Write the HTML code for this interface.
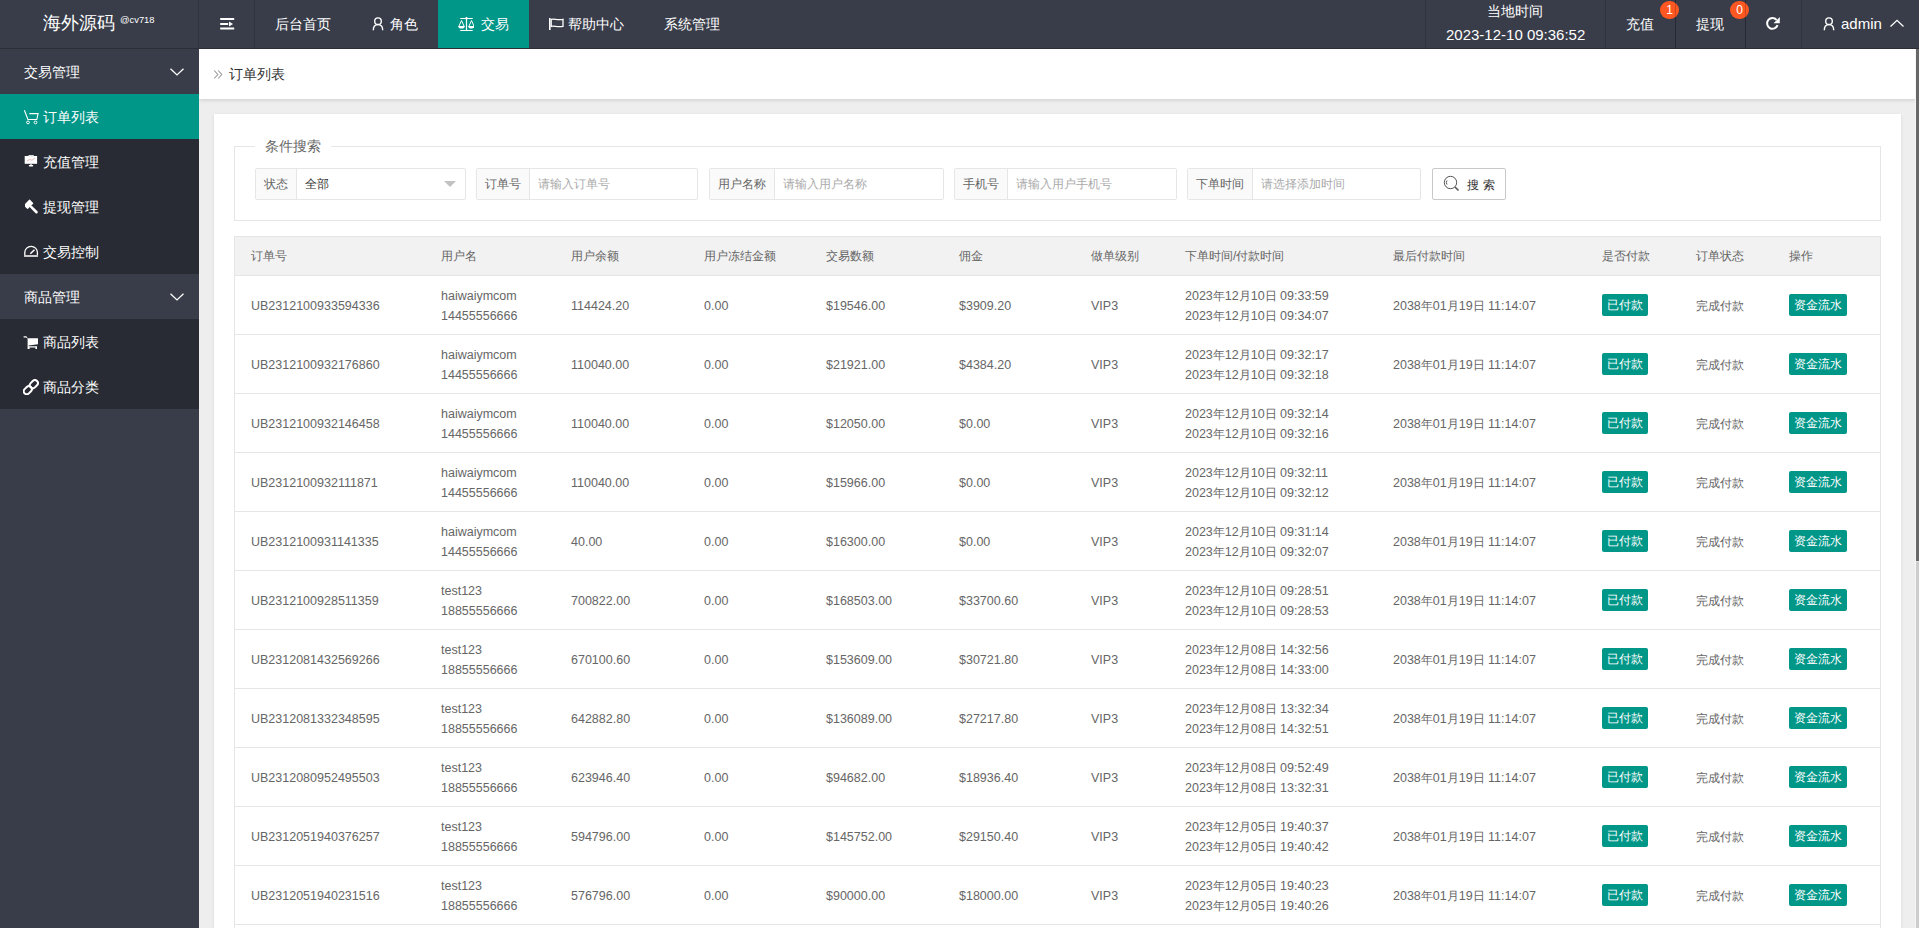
<!DOCTYPE html><html><head><meta charset="utf-8"><style>
*{margin:0;padding:0;box-sizing:border-box}
html,body{width:1919px;height:928px;overflow:hidden;background:#eee;font-family:"Liberation Sans",sans-serif;}
.abs{position:absolute}
.hdr{position:absolute;left:0;top:0;width:1919px;height:49px;background:#393D49;}
.hdr .t{position:absolute;color:#fff;font-size:14px;line-height:16px;white-space:nowrap}
.sep{position:absolute;top:0;width:1px;height:48px;background:#30333d}
.side{position:absolute;left:0;top:49px;width:199px;height:879px;background:#393D49}
.it{position:absolute;left:0;width:199px;height:45px;}
.it .t{position:absolute;left:43px;top:15px;color:#fff;font-size:14px;line-height:16px;white-space:nowrap}
.content{position:absolute;left:199px;top:49px;width:1717px;height:879px;background:#eeeeee;overflow:hidden}
.bc{position:absolute;left:0;top:0;width:1717px;height:50px;background:#fff;box-shadow:0 1px 4px rgba(0,0,0,.14)}
.card{position:absolute;left:15px;top:65px;width:1687px;height:900px;background:#fff;box-shadow:0 1px 3px 0 rgba(0,0,0,.1)}
.fs{position:absolute;left:20px;top:32px;width:1647px;height:75px;border:1px solid #e6e6e6}
.lg{position:absolute;left:20px;top:-9px;width:76px;padding:0 10px;white-space:nowrap;background:#fff;color:#666;font-size:14px;line-height:16px;}
.ig{position:absolute;top:21px;height:32px;border:1px solid #e6e6e6;border-radius:2px;background:#fff}
.ig .lb{position:absolute;left:0;top:0;height:30px;background:#fafafa;border-right:1px solid #e6e6e6;color:#666;font-size:12px;line-height:30px;text-align:center}
.ig .ph{position:absolute;top:0;color:#aaa;font-size:12px;line-height:30px;white-space:nowrap}
.tbl{position:absolute;left:20px;top:122px;width:1647px;height:800px;border-left:1px solid #e6e6e6;border-right:1px solid #e6e6e6;border-top:1px solid #e6e6e6}
.th{position:absolute;left:0;top:0;width:1645px;height:39px;background:#f2f2f2;border-bottom:1px solid #e6e6e6}
.tr{position:absolute;left:0;width:1645px;height:59px;border-bottom:1px solid #e6e6e6;background:#fff}
.c{position:absolute;color:#666;font-size:12.5px;line-height:20px;white-space:nowrap}
.c i,.bdg i{font-style:normal;font-size:12px;display:inline-block;width:12px}
.th .c{font-size:12px}
.bdg{position:absolute;top:18px;height:22px;line-height:22px;padding:0 5px;background:#009688;color:#fff;font-size:12px;border-radius:2px;white-space:nowrap}
</style></head><body>
<div class="hdr">
<div class="abs" style="left:0;top:48px;width:1919px;height:1px;background:#2b2e37"></div>
<div class="t" style="left:43px;top:13px;font-size:18px;line-height:20px">海外源码</div>
<div class="t" style="left:120px;top:14px;font-size:9.4px;line-height:12px">@cv718</div>
<div class="sep" style="left:198px"></div>
<div class="sep" style="left:254px"></div>
<div class="sep" style="left:1425px"></div>
<div class="sep" style="left:1605px"></div>
<div class="sep" style="left:1675px"></div>
<div class="sep" style="left:1745px"></div>
<div class="sep" style="left:1801px"></div>
<svg width="16" height="16" viewBox="0 0 16 16" style="position:absolute;left:219px;top:16px"><rect x="1.2" y="2" width="14" height="2" fill="#fff"/><rect x="1.2" y="7" width="8" height="2" fill="#fff"/><path d="M10 5.6 L14 8 L10 10.4Z" fill="#fff"/><rect x="1.2" y="11.5" width="14" height="2" fill="#fff"/></svg>
<div class="t" style="left:275px;top:16px">后台首页</div>
<svg width="14" height="16" viewBox="0 0 14 16" style="position:absolute;left:372px;top:16px"><circle cx="6" cy="5.2" r="3.3" fill="none" stroke="#fff" stroke-width="1.4"/><path d="M1.3 14.2 C1.3 10.5 3.3 8.6 6 8.6 C8.7 8.6 10.7 10.5 10.7 14.2" fill="none" stroke="#fff" stroke-width="1.4"/></svg>
<div class="t" style="left:390px;top:16px">角色</div>
<div class="abs" style="left:438px;top:0;width:91px;height:48px;background:#009688"></div>
<svg width="16" height="16" viewBox="0 0 16 16" style="position:absolute;left:458px;top:16px"><path d="M2.3 2.5 H14.7 M8.5 2.5 V14.5 M2.3 14.5 H14.7" fill="none" stroke="#fff" stroke-width="1.2"/><circle cx="8.5" cy="2.3" r="1.2" fill="#fff"/><path d="M3.5 4.5 L0.8 10.5 M3.5 4.5 L6.2 10.5 M13.5 4.5 L10.8 10.5 M13.5 4.5 L16.2 10.5" fill="none" stroke="#fff" stroke-width="1"/><path d="M0.3 10 H6.7 A3.2 2.6 0 0 1 0.3 10Z M10.3 10 H16.7 A3.2 2.6 0 0 1 10.3 10Z" fill="#fff"/></svg>
<div class="t" style="left:481px;top:16px">交易</div>
<svg width="16" height="16" viewBox="0 0 16 16" style="position:absolute;left:548px;top:16px"><rect x="1" y="2" width="1.6" height="12" fill="#fff"/><path d="M3.2 3.4 C6 2.2 9 4.6 15 3.4 V10.4 C9 11.6 6 9.2 3.2 10.4Z" fill="none" stroke="#fff" stroke-width="1.3"/></svg>
<div class="t" style="left:568px;top:16px">帮助中心</div>
<div class="t" style="left:664px;top:16px">系统管理</div>
<div class="t" style="left:1487px;top:3px">当地时间</div>
<div class="t" style="left:1446px;top:26px;font-size:15px;line-height:17px">2023-12-10 09:36:52</div>
<div class="t" style="left:1626px;top:16px">充值</div>
<div class="t" style="left:1696px;top:16px">提现</div>
<div class="abs" style="left:1660px;top:1px;width:19px;height:18px;border-radius:9px;background:#FF5722;color:#fff;font-size:12px;line-height:19px;text-align:center">1</div>
<div class="abs" style="left:1730px;top:1px;width:19px;height:18px;border-radius:9px;background:#FF5722;color:#fff;font-size:12px;line-height:19px;text-align:center">0</div>
<div class="sep" style="left:1675px;background:rgba(0,0,0,.18)"></div>
<div class="sep" style="left:1745px;background:rgba(0,0,0,.18)"></div>
<svg width="16" height="16" viewBox="0 0 16 16" style="position:absolute;left:1765px;top:16px"><path d="M12.6 9.2 A5.4 5.4 0 1 1 11.6 3.8" fill="none" stroke="#fff" stroke-width="2"/><path d="M14.8 1 V7.2 H8.6Z" fill="#fff"/></svg>
<svg width="14" height="16" viewBox="0 0 14 16" style="position:absolute;left:1823px;top:16px"><circle cx="6" cy="5.2" r="3.3" fill="none" stroke="#fff" stroke-width="1.4"/><path d="M1.3 14.2 C1.3 10.5 3.3 8.6 6 8.6 C8.7 8.6 10.7 10.5 10.7 14.2" fill="none" stroke="#fff" stroke-width="1.4"/></svg>
<div class="t" style="left:1841px;top:15px;font-size:15px;line-height:17px">admin</div>
<svg width="16" height="10" viewBox="0 0 16 10" style="position:absolute;left:1889px;top:19px"><path d="M1.5 7.5 L8 1.3 L14.5 7.5" fill="none" stroke="#fff" stroke-width="1.3"/></svg>
</div>
<div class="side">
<div class="it" style="top:0px;background:#393D49">
<div class="t" style="left:24px;top:15px">交易管理</div>
<svg width="16" height="10" viewBox="0 0 16 10" style="position:absolute;left:169px;top:19px"><path d="M1.5 0.8 L8 6.9 L14.5 0.8" fill="none" stroke="#fff" stroke-width="1.3"/></svg>
</div>
<div class="it" style="top:45px;background:#009688">
<svg width="16" height="16" viewBox="0 0 16 16" style="position:absolute;left:23px;top:15px"><path d="M1.4 1.2 L4.9 10.5 H13.8 L15.1 4.6 H6.3" fill="none" stroke="#fff" stroke-width="1.1"/><circle cx="5" cy="13.4" r="1.4" fill="none" stroke="#fff" stroke-width="1"/><circle cx="12.5" cy="13.4" r="1.4" fill="none" stroke="#fff" stroke-width="1"/></svg>
<div class="t">订单列表</div>
</div>
<div class="it" style="top:90px;background:#282B33">
<svg width="16" height="16" viewBox="0 0 16 16" style="position:absolute;left:23px;top:13px"><rect x="1.7" y="4" width="12.4" height="7.8" fill="#fff"/><rect x="5.5" y="3" width="5.3" height="1.5" fill="#ddd"/><path d="M4 9 L6.5 7.5 L9 8.2 L12 6" fill="none" stroke="#d99" stroke-width=".7"/><rect x="7.4" y="11.8" width="1.2" height="1.5" fill="#fff"/><rect x="5.8" y="13.1" width="4.4" height="1.3" rx=".6" fill="#fff"/></svg>
<div class="t">充值管理</div>
</div>
<div class="it" style="top:135px;background:#282B33">
<svg width="16" height="16" viewBox="0 0 16 16" style="position:absolute;left:24.5px;top:15px"><g transform="rotate(-45 8 8)"><rect x="2.6" y="0.2" width="8.4" height="5.6" rx="0.6" fill="#fff"/><rect x="5.5" y="5.4" width="2.6" height="10" rx="1.2" fill="#fff"/></g></svg>
<div class="t">提现管理</div>
</div>
<div class="it" style="top:180px;background:#282B33">
<svg width="16" height="16" viewBox="0 0 16 16" style="position:absolute;left:23px;top:14px"><path d="M1.8 13.2 V9.6 A6.3 6.3 0 0 1 14.4 9.6 V13.2Z" fill="none" stroke="#fff" stroke-width="1.3"/><rect x="1.2" y="12" width="13.8" height="1.8" fill="#ccc"/><path d="M7.3 10.8 L11.5 6.8" stroke="#fff" stroke-width="1.5"/></svg>
<div class="t">交易控制</div>
</div>
<div class="it" style="top:225px;background:#393D49">
<div class="t" style="left:24px;top:15px">商品管理</div>
<svg width="16" height="10" viewBox="0 0 16 10" style="position:absolute;left:169px;top:19px"><path d="M1.5 0.8 L8 6.9 L14.5 0.8" fill="none" stroke="#fff" stroke-width="1.3"/></svg>
</div>
<div class="it" style="top:270px;background:#282B33">
<svg width="16" height="16" viewBox="0 0 16 16" style="position:absolute;left:23px;top:16px"><path d="M0.6 1.3 H3.4 L4.7 3.2 H15 V9.3 L5.6 10.6 V11.3 H14 V14 H12.4 V12.6 H6.6 V14 H4.6 V3.4 L3 2.4 H0.6Z" fill="#fff"/></svg>
<div class="t">商品列表</div>
</div>
<div class="it" style="top:315px;background:#282B33">
<svg width="16" height="16" viewBox="0 0 16 16" style="position:absolute;left:23px;top:14.5px"><g transform="rotate(-45 8 8)" fill="none" stroke="#fff" stroke-width="2"><rect x="-1" y="5" width="9" height="6" rx="3"/><rect x="7.5" y="5" width="9" height="6" rx="3"/></g></svg>
<div class="t">商品分类</div>
</div>
</div>
<div class="content">
<div class="bc"><svg width="12" height="12" viewBox="0 0 12 12" style="position:absolute;left:214px;top:20px;left:14px"><path d="M1.2 1.5 L4.8 5.5 L1.2 9.5 M5.2 1.5 L8.8 5.5 L5.2 9.5" fill="none" stroke="#999" stroke-width="1.1"/></svg><div class="abs" style="left:30px;top:17px;color:#333;font-size:14px;line-height:16px">订单列表</div></div>
<div class="card">
<div class="fs"><div class="lg">条件搜索</div>
<div class="ig" style="left:20px;width:211px"><div class="lb" style="width:41px">状态</div>
<div class="ph" style="left:49px;color:#333">全部</div>
<svg width="14" height="8" viewBox="0 0 14 8" style="position:absolute;left:187px;top:11px"><path d="M1 1 H13 L7 7Z" fill="#c2c2c2"/></svg>
</div>
<div class="ig" style="left:241px;width:222px"><div class="lb" style="width:53px">订单号</div>
<div class="ph" style="left:61px;color:#aaa">请输入订单号</div>
</div>
<div class="ig" style="left:474px;width:235px"><div class="lb" style="width:65px">用户名称</div>
<div class="ph" style="left:73px;color:#aaa">请输入用户名称</div>
</div>
<div class="ig" style="left:719px;width:223px"><div class="lb" style="width:53px">手机号</div>
<div class="ph" style="left:61px;color:#aaa">请输入用户手机号</div>
</div>
<div class="ig" style="left:952px;width:234px"><div class="lb" style="width:65px">下单时间</div>
<div class="ph" style="left:73px;color:#aaa">请选择添加时间</div>
</div>
<div class="abs" style="left:1197px;top:21px;width:74px;height:32px;border:1px solid #c9c9c9;border-radius:2px;background:#fff">
<svg width="18" height="18" viewBox="0 0 18 18" style="position:absolute;left:10px;top:6px"><circle cx="7.5" cy="7.5" r="6.2" fill="none" stroke="#555" stroke-width="1"/><path d="M4 5.5 A3.5 3.5 0 0 0 4 9.5" fill="none" stroke="#555" stroke-width="1"/><path d="M12 12 L15.5 15.5" stroke="#555" stroke-width="1.6"/></svg>
<div class="abs" style="left:34px;top:9px;color:#333;font-size:12px;line-height:14px;letter-spacing:4px;white-space:nowrap">搜索</div>
</div>
</div>
<div class="tbl"><div class="th">
<div class="c" style="left:16px;top:9px"><i>订</i><i>单</i><i>号</i></div>
<div class="c" style="left:206px;top:9px"><i>用</i><i>户</i><i>名</i></div>
<div class="c" style="left:336px;top:9px"><i>用</i><i>户</i><i>余</i><i>额</i></div>
<div class="c" style="left:469px;top:9px"><i>用</i><i>户</i><i>冻</i><i>结</i><i>金</i><i>额</i></div>
<div class="c" style="left:591px;top:9px"><i>交</i><i>易</i><i>数</i><i>额</i></div>
<div class="c" style="left:724px;top:9px"><i>佣</i><i>金</i></div>
<div class="c" style="left:856px;top:9px"><i>做</i><i>单</i><i>级</i><i>别</i></div>
<div class="c" style="left:950px;top:9px"><i>下</i><i>单</i><i>时</i><i>间</i>/<i>付</i><i>款</i><i>时</i><i>间</i></div>
<div class="c" style="left:1158px;top:9px"><i>最</i><i>后</i><i>付</i><i>款</i><i>时</i><i>间</i></div>
<div class="c" style="left:1367px;top:9px"><i>是</i><i>否</i><i>付</i><i>款</i></div>
<div class="c" style="left:1461px;top:9px"><i>订</i><i>单</i><i>状</i><i>态</i></div>
<div class="c" style="left:1554px;top:9px"><i>操</i><i>作</i></div>
</div>
<div class="tr" style="top:39px">
<div class="c" style="left:16px;top:20px">UB2312100933594336</div>
<div class="c" style="left:206px;top:10px">haiwaiymcom<br>14455556666</div>
<div class="c" style="left:336px;top:20px">114424.20</div>
<div class="c" style="left:469px;top:20px">0.00</div>
<div class="c" style="left:591px;top:20px">$19546.00</div>
<div class="c" style="left:724px;top:20px">$3909.20</div>
<div class="c" style="left:856px;top:20px">VIP3</div>
<div class="c" style="left:950px;top:10px">2023<i>年</i>12<i>月</i>10<i>日</i> 09:33:59<br>2023<i>年</i>12<i>月</i>10<i>日</i> 09:34:07</div>
<div class="c" style="left:1158px;top:20px">2038<i>年</i>01<i>月</i>19<i>日</i> 11:14:07</div>
<div class="bdg" style="left:1367px;width:46px">已付款</div>
<div class="c" style="left:1461px;top:20px"><i>完</i><i>成</i><i>付</i><i>款</i></div>
<div class="bdg" style="left:1554px;width:58px">资金流水</div>
</div>
<div class="tr" style="top:98px">
<div class="c" style="left:16px;top:20px">UB2312100932176860</div>
<div class="c" style="left:206px;top:10px">haiwaiymcom<br>14455556666</div>
<div class="c" style="left:336px;top:20px">110040.00</div>
<div class="c" style="left:469px;top:20px">0.00</div>
<div class="c" style="left:591px;top:20px">$21921.00</div>
<div class="c" style="left:724px;top:20px">$4384.20</div>
<div class="c" style="left:856px;top:20px">VIP3</div>
<div class="c" style="left:950px;top:10px">2023<i>年</i>12<i>月</i>10<i>日</i> 09:32:17<br>2023<i>年</i>12<i>月</i>10<i>日</i> 09:32:18</div>
<div class="c" style="left:1158px;top:20px">2038<i>年</i>01<i>月</i>19<i>日</i> 11:14:07</div>
<div class="bdg" style="left:1367px;width:46px">已付款</div>
<div class="c" style="left:1461px;top:20px"><i>完</i><i>成</i><i>付</i><i>款</i></div>
<div class="bdg" style="left:1554px;width:58px">资金流水</div>
</div>
<div class="tr" style="top:157px">
<div class="c" style="left:16px;top:20px">UB2312100932146458</div>
<div class="c" style="left:206px;top:10px">haiwaiymcom<br>14455556666</div>
<div class="c" style="left:336px;top:20px">110040.00</div>
<div class="c" style="left:469px;top:20px">0.00</div>
<div class="c" style="left:591px;top:20px">$12050.00</div>
<div class="c" style="left:724px;top:20px">$0.00</div>
<div class="c" style="left:856px;top:20px">VIP3</div>
<div class="c" style="left:950px;top:10px">2023<i>年</i>12<i>月</i>10<i>日</i> 09:32:14<br>2023<i>年</i>12<i>月</i>10<i>日</i> 09:32:16</div>
<div class="c" style="left:1158px;top:20px">2038<i>年</i>01<i>月</i>19<i>日</i> 11:14:07</div>
<div class="bdg" style="left:1367px;width:46px">已付款</div>
<div class="c" style="left:1461px;top:20px"><i>完</i><i>成</i><i>付</i><i>款</i></div>
<div class="bdg" style="left:1554px;width:58px">资金流水</div>
</div>
<div class="tr" style="top:216px">
<div class="c" style="left:16px;top:20px">UB2312100932111871</div>
<div class="c" style="left:206px;top:10px">haiwaiymcom<br>14455556666</div>
<div class="c" style="left:336px;top:20px">110040.00</div>
<div class="c" style="left:469px;top:20px">0.00</div>
<div class="c" style="left:591px;top:20px">$15966.00</div>
<div class="c" style="left:724px;top:20px">$0.00</div>
<div class="c" style="left:856px;top:20px">VIP3</div>
<div class="c" style="left:950px;top:10px">2023<i>年</i>12<i>月</i>10<i>日</i> 09:32:11<br>2023<i>年</i>12<i>月</i>10<i>日</i> 09:32:12</div>
<div class="c" style="left:1158px;top:20px">2038<i>年</i>01<i>月</i>19<i>日</i> 11:14:07</div>
<div class="bdg" style="left:1367px;width:46px">已付款</div>
<div class="c" style="left:1461px;top:20px"><i>完</i><i>成</i><i>付</i><i>款</i></div>
<div class="bdg" style="left:1554px;width:58px">资金流水</div>
</div>
<div class="tr" style="top:275px">
<div class="c" style="left:16px;top:20px">UB2312100931141335</div>
<div class="c" style="left:206px;top:10px">haiwaiymcom<br>14455556666</div>
<div class="c" style="left:336px;top:20px">40.00</div>
<div class="c" style="left:469px;top:20px">0.00</div>
<div class="c" style="left:591px;top:20px">$16300.00</div>
<div class="c" style="left:724px;top:20px">$0.00</div>
<div class="c" style="left:856px;top:20px">VIP3</div>
<div class="c" style="left:950px;top:10px">2023<i>年</i>12<i>月</i>10<i>日</i> 09:31:14<br>2023<i>年</i>12<i>月</i>10<i>日</i> 09:32:07</div>
<div class="c" style="left:1158px;top:20px">2038<i>年</i>01<i>月</i>19<i>日</i> 11:14:07</div>
<div class="bdg" style="left:1367px;width:46px">已付款</div>
<div class="c" style="left:1461px;top:20px"><i>完</i><i>成</i><i>付</i><i>款</i></div>
<div class="bdg" style="left:1554px;width:58px">资金流水</div>
</div>
<div class="tr" style="top:334px">
<div class="c" style="left:16px;top:20px">UB2312100928511359</div>
<div class="c" style="left:206px;top:10px">test123<br>18855556666</div>
<div class="c" style="left:336px;top:20px">700822.00</div>
<div class="c" style="left:469px;top:20px">0.00</div>
<div class="c" style="left:591px;top:20px">$168503.00</div>
<div class="c" style="left:724px;top:20px">$33700.60</div>
<div class="c" style="left:856px;top:20px">VIP3</div>
<div class="c" style="left:950px;top:10px">2023<i>年</i>12<i>月</i>10<i>日</i> 09:28:51<br>2023<i>年</i>12<i>月</i>10<i>日</i> 09:28:53</div>
<div class="c" style="left:1158px;top:20px">2038<i>年</i>01<i>月</i>19<i>日</i> 11:14:07</div>
<div class="bdg" style="left:1367px;width:46px">已付款</div>
<div class="c" style="left:1461px;top:20px"><i>完</i><i>成</i><i>付</i><i>款</i></div>
<div class="bdg" style="left:1554px;width:58px">资金流水</div>
</div>
<div class="tr" style="top:393px">
<div class="c" style="left:16px;top:20px">UB2312081432569266</div>
<div class="c" style="left:206px;top:10px">test123<br>18855556666</div>
<div class="c" style="left:336px;top:20px">670100.60</div>
<div class="c" style="left:469px;top:20px">0.00</div>
<div class="c" style="left:591px;top:20px">$153609.00</div>
<div class="c" style="left:724px;top:20px">$30721.80</div>
<div class="c" style="left:856px;top:20px">VIP3</div>
<div class="c" style="left:950px;top:10px">2023<i>年</i>12<i>月</i>08<i>日</i> 14:32:56<br>2023<i>年</i>12<i>月</i>08<i>日</i> 14:33:00</div>
<div class="c" style="left:1158px;top:20px">2038<i>年</i>01<i>月</i>19<i>日</i> 11:14:07</div>
<div class="bdg" style="left:1367px;width:46px">已付款</div>
<div class="c" style="left:1461px;top:20px"><i>完</i><i>成</i><i>付</i><i>款</i></div>
<div class="bdg" style="left:1554px;width:58px">资金流水</div>
</div>
<div class="tr" style="top:452px">
<div class="c" style="left:16px;top:20px">UB2312081332348595</div>
<div class="c" style="left:206px;top:10px">test123<br>18855556666</div>
<div class="c" style="left:336px;top:20px">642882.80</div>
<div class="c" style="left:469px;top:20px">0.00</div>
<div class="c" style="left:591px;top:20px">$136089.00</div>
<div class="c" style="left:724px;top:20px">$27217.80</div>
<div class="c" style="left:856px;top:20px">VIP3</div>
<div class="c" style="left:950px;top:10px">2023<i>年</i>12<i>月</i>08<i>日</i> 13:32:34<br>2023<i>年</i>12<i>月</i>08<i>日</i> 14:32:51</div>
<div class="c" style="left:1158px;top:20px">2038<i>年</i>01<i>月</i>19<i>日</i> 11:14:07</div>
<div class="bdg" style="left:1367px;width:46px">已付款</div>
<div class="c" style="left:1461px;top:20px"><i>完</i><i>成</i><i>付</i><i>款</i></div>
<div class="bdg" style="left:1554px;width:58px">资金流水</div>
</div>
<div class="tr" style="top:511px">
<div class="c" style="left:16px;top:20px">UB2312080952495503</div>
<div class="c" style="left:206px;top:10px">test123<br>18855556666</div>
<div class="c" style="left:336px;top:20px">623946.40</div>
<div class="c" style="left:469px;top:20px">0.00</div>
<div class="c" style="left:591px;top:20px">$94682.00</div>
<div class="c" style="left:724px;top:20px">$18936.40</div>
<div class="c" style="left:856px;top:20px">VIP3</div>
<div class="c" style="left:950px;top:10px">2023<i>年</i>12<i>月</i>08<i>日</i> 09:52:49<br>2023<i>年</i>12<i>月</i>08<i>日</i> 13:32:31</div>
<div class="c" style="left:1158px;top:20px">2038<i>年</i>01<i>月</i>19<i>日</i> 11:14:07</div>
<div class="bdg" style="left:1367px;width:46px">已付款</div>
<div class="c" style="left:1461px;top:20px"><i>完</i><i>成</i><i>付</i><i>款</i></div>
<div class="bdg" style="left:1554px;width:58px">资金流水</div>
</div>
<div class="tr" style="top:570px">
<div class="c" style="left:16px;top:20px">UB2312051940376257</div>
<div class="c" style="left:206px;top:10px">test123<br>18855556666</div>
<div class="c" style="left:336px;top:20px">594796.00</div>
<div class="c" style="left:469px;top:20px">0.00</div>
<div class="c" style="left:591px;top:20px">$145752.00</div>
<div class="c" style="left:724px;top:20px">$29150.40</div>
<div class="c" style="left:856px;top:20px">VIP3</div>
<div class="c" style="left:950px;top:10px">2023<i>年</i>12<i>月</i>05<i>日</i> 19:40:37<br>2023<i>年</i>12<i>月</i>05<i>日</i> 19:40:42</div>
<div class="c" style="left:1158px;top:20px">2038<i>年</i>01<i>月</i>19<i>日</i> 11:14:07</div>
<div class="bdg" style="left:1367px;width:46px">已付款</div>
<div class="c" style="left:1461px;top:20px"><i>完</i><i>成</i><i>付</i><i>款</i></div>
<div class="bdg" style="left:1554px;width:58px">资金流水</div>
</div>
<div class="tr" style="top:629px">
<div class="c" style="left:16px;top:20px">UB2312051940231516</div>
<div class="c" style="left:206px;top:10px">test123<br>18855556666</div>
<div class="c" style="left:336px;top:20px">576796.00</div>
<div class="c" style="left:469px;top:20px">0.00</div>
<div class="c" style="left:591px;top:20px">$90000.00</div>
<div class="c" style="left:724px;top:20px">$18000.00</div>
<div class="c" style="left:856px;top:20px">VIP3</div>
<div class="c" style="left:950px;top:10px">2023<i>年</i>12<i>月</i>05<i>日</i> 19:40:23<br>2023<i>年</i>12<i>月</i>05<i>日</i> 19:40:26</div>
<div class="c" style="left:1158px;top:20px">2038<i>年</i>01<i>月</i>19<i>日</i> 11:14:07</div>
<div class="bdg" style="left:1367px;width:46px">已付款</div>
<div class="c" style="left:1461px;top:20px"><i>完</i><i>成</i><i>付</i><i>款</i></div>
<div class="bdg" style="left:1554px;width:58px">资金流水</div>
</div>
<div class="tr" style="top:688px">
<div class="c" style="left:16px;top:20px">UB2312051939000000</div>
<div class="c" style="left:206px;top:10px">test123<br>18855556666</div>
<div class="c" style="left:336px;top:20px">0.00</div>
<div class="c" style="left:469px;top:20px">0.00</div>
<div class="c" style="left:591px;top:20px">$0.00</div>
<div class="c" style="left:724px;top:20px">$0.00</div>
<div class="c" style="left:856px;top:20px">VIP3</div>
<div class="c" style="left:950px;top:10px"><br></div>
<div class="c" style="left:1158px;top:20px">2038<i>年</i>01<i>月</i>19<i>日</i> 11:14:07</div>
<div class="bdg" style="left:1367px;width:46px">已付款</div>
<div class="c" style="left:1461px;top:20px"><i>完</i><i>成</i><i>付</i><i>款</i></div>
<div class="bdg" style="left:1554px;width:58px">资金流水</div>
</div>
</div>
</div>
</div>
<div class="abs" style="left:1916px;top:49px;width:3px;height:879px;background:#cdcdcd"></div>
<div class="abs" style="left:1916px;top:49px;width:3px;height:512px;background:#686868"></div>
<div class="abs" style="left:1916px;top:561px;width:3px;height:1px;background:#dcdcdc"></div>
<div class="abs" style="left:1915px;top:49px;width:1px;height:879px;background:#f6f6f6"></div>
</body></html>
